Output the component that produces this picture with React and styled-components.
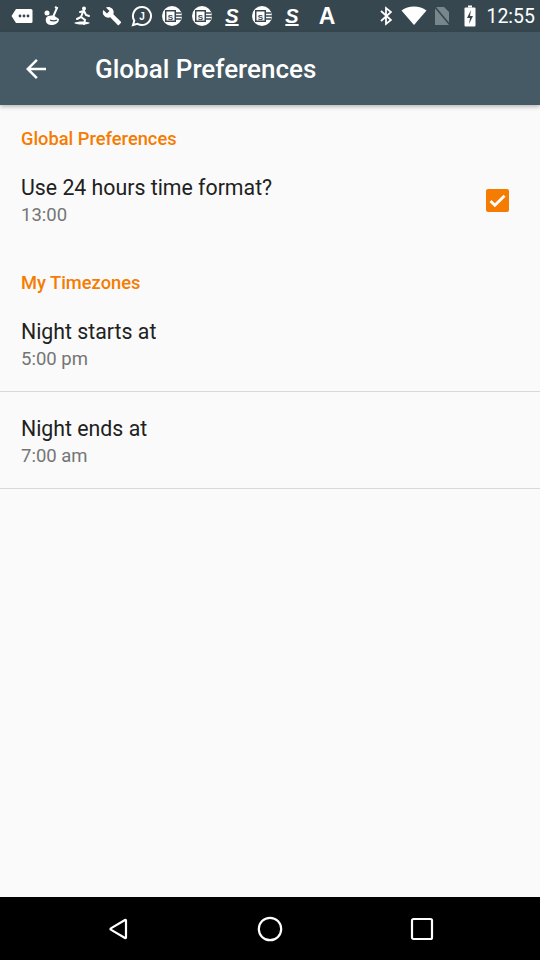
import React from "react";
import styled, { createGlobalStyle } from "styled-components";

const GlobalStyle = createGlobalStyle`
  html, body {
    margin: 0;
    padding: 0;
    background: #fafafa;
  }
  body {
    font-family: Roboto, "Noto Sans", "Liberation Sans", sans-serif;
  }
`;

const Screen = styled.div`
  width: 540px;
  height: 960px;
  display: flex;
  flex-direction: column;
  background: #fafafa;
  overflow: hidden;
`;

const StatusBar = styled.div`
  height: 32px;
  flex-shrink: 0;
  background: #37474f;
  display: flex;
  align-items: center;
  padding: 0 5px 0 7px;
  color: #fff;
`;

const StatusGroup = styled.div`
  display: flex;
  align-items: center;
`;

const StatusSlot = styled.div`
  width: ${(p) => p.$w || 30}px;
  height: 32px;
  display: flex;
  align-items: center;
  justify-content: center;
`;

const GlyphIcon = styled.span`
  font-family: "Liberation Sans", Arial, sans-serif;
  font-weight: 700;
  font-style: ${(p) => (p.$italic ? "italic" : "normal")};
  font-size: ${(p) => p.$size || 20}px;
  line-height: 1;
  color: #fff;
  text-decoration: ${(p) => (p.$under ? "underline" : "none")};
  text-decoration-thickness: 2px;
  text-underline-offset: 1px;
`;

const Spacer = styled.div`
  flex: 1;
`;

const Clock = styled.div`
  font-size: 19.5px;
  color: #fff;
  margin-left: 2px;
`;

const AppBar = styled.header`
  height: 73px;
  flex-shrink: 0;
  background: #455a64;
  display: flex;
  align-items: center;
  box-shadow: 0 2px 4px rgba(0, 0, 0, 0.25);
  position: relative;
  z-index: 1;
`;

const BackButton = styled.div`
  width: 72px;
  height: 72px;
  display: flex;
  align-items: center;
  justify-content: center;
`;

const Title = styled.h1`
  margin: 0 0 0 23px;
  font-size: 26px;
  font-weight: 500;
  color: #fff;
`;

const Content = styled.main`
  flex: 1;
`;

const Category = styled.div`
  padding: ${(p) => p.$top}px 21px 10px;
  font-size: 18.3px;
  line-height: 20px;
  font-weight: 500;
  color: #f57c00;
`;

const Row = styled.div`
  display: flex;
  align-items: center;
  padding: ${(p) => p.$top}px 31px ${(p) => p.$bottom}px 21px;
  border-bottom: ${(p) => (p.$divider ? "1px solid #d9d9d9" : "none")};
`;

const RowText = styled.div`
  flex: 1;
  display: flex;
  flex-direction: column;
  gap: 5px;
`;

const RowTitle = styled.div`
  font-size: 21.3px;
  line-height: 24px;
  color: #212121;
`;

const RowSummary = styled.div`
  font-size: 18.5px;
  line-height: 20px;
  color: #757575;
`;

const CheckBox = styled.div`
  width: 23px;
  height: 23px;
  border-radius: 2px;
  background: #f57c00;
  display: flex;
  align-items: center;
  justify-content: center;
`;

const NavBar = styled.nav`
  height: 63px;
  flex-shrink: 0;
  background: #000;
  display: flex;
  justify-content: center;
  align-items: center;
`;

const NavSlot = styled.div`
  width: 152px;
  display: flex;
  justify-content: center;
  align-items: center;
`;

const MsgIcon = () => (
  <svg width="22" height="16" viewBox="0 0 22 16">
    <path d="M5 1h15a1.5 1.5 0 0 1 1.5 1.5v11A1.5 1.5 0 0 1 20 15H5L0.5 8z" fill="#fff" />
    <circle cx="9" cy="8" r="1.4" fill="#37474f" />
    <circle cx="13" cy="8" r="1.4" fill="#37474f" />
    <circle cx="17" cy="8" r="1.4" fill="#37474f" />
  </svg>
);

const DanceIcon = () => (
  <svg width="20" height="20" viewBox="0 0 20 20">
    <circle cx="5" cy="7" r="2.5" fill="#fff" />
    <path d="M13 1l2 1-4 9" stroke="#fff" strokeWidth="2" fill="none" />
    <path d="M4 12c2-3 7-3 10-1l3 2c0 4-4 6-8 6s-6-3-5-7z" fill="#fff" />
    <path d="M8 14c2 1 5 1 7 0" stroke="#37474f" strokeWidth="1.3" fill="none" />
  </svg>
);

const RunnerIcon = () => (
  <svg width="20" height="20" viewBox="0 0 20 20">
    <circle cx="12" cy="2.5" r="2" fill="#fff" />
    <path d="M8 6l4-1 2 4 3 1M11 6l-2 5 4 3-1 4M9 11l-4 2" stroke="#fff" strokeWidth="2" fill="none" strokeLinecap="round" />
    <path d="M2 17c4-2 12-2 16 0-4 2-12 2-16 0z" fill="#fff" />
  </svg>
);

const WrenchIcon = () => (
  <svg width="20" height="20" viewBox="0 0 24 24">
    <path d="M22.7 19l-9.1-9.1c.9-2.3.4-5-1.5-6.9-2-2-5-2.4-7.4-1.3L9 6 6 9 1.6 4.7C.4 7.1.9 10.1 2.9 12.1c1.9 1.9 4.6 2.4 6.9 1.5l9.1 9.1c.4.4 1 .4 1.4 0l2.3-2.3c.5-.4.5-1.1.1-1.4z" fill="#fff" />
  </svg>
);

const ChatJIcon = () => (
  <svg width="22" height="22" viewBox="0 0 22 22">
    <path d="M11 2a9 9 0 1 1-4.5 16.8L2 20l1.3-4.3A9 9 0 0 1 11 2z" stroke="#fff" strokeWidth="2" fill="none" />
    <text x="11" y="15" textAnchor="middle" fontSize="10" fontWeight="700" fill="#fff" fontFamily="Liberation Sans, sans-serif">J</text>
  </svg>
);

const SeIcon = () => (
  <svg width="22" height="22" viewBox="0 0 22 22">
    <circle cx="11" cy="11" r="10" fill="#fff" />
    <rect x="4" y="5" width="11" height="12" fill="#37474f" />
    <rect x="5.5" y="6.5" width="8" height="9" fill="#fff" />
    <text x="9.5" y="14.5" textAnchor="middle" fontSize="8" fontWeight="700" fill="#37474f" fontFamily="Liberation Sans, sans-serif">S</text>
    <path d="M15 8h5M15 11h6M15 14h5" stroke="#37474f" strokeWidth="1.3" />
  </svg>
);

const BluetoothIcon = () => (
  <svg width="12" height="20" viewBox="0 0 12 20">
    <path d="M1 5l10 9-5 4V2l5 4-10 9" stroke="#fff" strokeWidth="1.8" fill="none" />
  </svg>
);

const WifiIcon = () => (
  <svg width="26" height="20" viewBox="0 0 26 20">
    <path d="M13 19L0.5 4.5C4 1.8 8.3 0.5 13 0.5s9 1.3 12.5 4z" fill="#fff" />
  </svg>
);

const NoSimIcon = () => (
  <svg width="16" height="20" viewBox="0 0 16 20">
    <path d="M1 1h9l5 5v13H1z" fill="#78878c" />
    <path d="M1 1l15 18" stroke="#37474f" strokeWidth="1.6" />
  </svg>
);

const BatteryIcon = () => (
  <svg width="12" height="22" viewBox="0 0 12 22">
    <rect x="4" y="0.5" width="4" height="2" fill="#fff" />
    <rect x="0.5" y="2.5" width="11" height="19" rx="1" fill="#fff" />
    <path d="M7 5l-4 8h3l-1 6 4-8H6z" fill="#37474f" />
  </svg>
);

const BackArrow = () => (
  <svg width="30" height="30" viewBox="0 0 24 24">
    <path d="M20 11H7.83l5.59-5.59L12 4l-8 8 8 8 1.41-1.41L7.83 13H20v-2z" fill="#fff" />
  </svg>
);

const CheckMark = () => (
  <svg width="21" height="21" viewBox="0 0 24 24">
    <path d="M4 12.5l5 5L20 6.5" stroke="#fff" strokeWidth="3.2" fill="none" />
  </svg>
);

const NavBack = () => (
  <svg width="24" height="24" viewBox="0 0 24 24">
    <path d="M20 3.5v17c0 .6-.5.8-1 .5L4.8 12.6a.7.7 0 0 1 0-1.2L19 3c.5-.3 1-.1 1 .5z" stroke="#fff" strokeWidth="2.2" fill="none" strokeLinejoin="round" />
  </svg>
);

const NavHome = () => (
  <svg width="26" height="26" viewBox="0 0 26 26">
    <circle cx="13" cy="13" r="11.2" stroke="#fff" strokeWidth="2.2" fill="none" />
  </svg>
);

const NavRecents = () => (
  <svg width="24" height="24" viewBox="0 0 24 24">
    <rect x="2" y="2" width="20" height="20" rx="1.5" stroke="#fff" strokeWidth="2.2" fill="none" />
  </svg>
);

const App = () => {
  return (
    <Screen>
      <GlobalStyle />
      <StatusBar>
        <StatusGroup>
          <StatusSlot><MsgIcon /></StatusSlot>
          <StatusSlot><DanceIcon /></StatusSlot>
          <StatusSlot><RunnerIcon /></StatusSlot>
          <StatusSlot><WrenchIcon /></StatusSlot>
          <StatusSlot><ChatJIcon /></StatusSlot>
          <StatusSlot><SeIcon /></StatusSlot>
          <StatusSlot><SeIcon /></StatusSlot>
          <StatusSlot><GlyphIcon $italic $under $size={20}>S</GlyphIcon></StatusSlot>
          <StatusSlot><SeIcon /></StatusSlot>
          <StatusSlot><GlyphIcon $italic $under $size={20}>S</GlyphIcon></StatusSlot>
          <StatusSlot $w={40}><GlyphIcon $size={23}>A</GlyphIcon></StatusSlot>
        </StatusGroup>
        <Spacer />
        <StatusGroup>
          <StatusSlot $w={28}><BluetoothIcon /></StatusSlot>
          <StatusSlot $w={28}><WifiIcon /></StatusSlot>
          <StatusSlot $w={28}><NoSimIcon /></StatusSlot>
          <StatusSlot $w={28}><BatteryIcon /></StatusSlot>
          <Clock>12:55</Clock>
        </StatusGroup>
      </StatusBar>

      <AppBar>
        <BackButton><BackArrow /></BackButton>
        <Title>Global Preferences</Title>
      </AppBar>

      <Content>
        <Category $top={24}>Global Preferences</Category>
        <Row $top={17} $bottom={15}>
          <RowText>
            <RowTitle>Use 24 hours time format?</RowTitle>
            <RowSummary>13:00</RowSummary>
          </RowText>
          <CheckBox><CheckMark /></CheckBox>
        </Row>

        <Category $top={33}>My Timezones</Category>
        <Row $top={17} $bottom={22} $divider>
          <RowText>
            <RowTitle>Night starts at</RowTitle>
            <RowSummary>5:00 pm</RowSummary>
          </RowText>
        </Row>
        <Row $top={25} $bottom={22} $divider>
          <RowText>
            <RowTitle>Night ends at</RowTitle>
            <RowSummary>7:00 am</RowSummary>
          </RowText>
        </Row>
      </Content>

      <NavBar>
        <NavSlot><NavBack /></NavSlot>
        <NavSlot><NavHome /></NavSlot>
        <NavSlot><NavRecents /></NavSlot>
      </NavBar>
    </Screen>
  );
};

export default App;
